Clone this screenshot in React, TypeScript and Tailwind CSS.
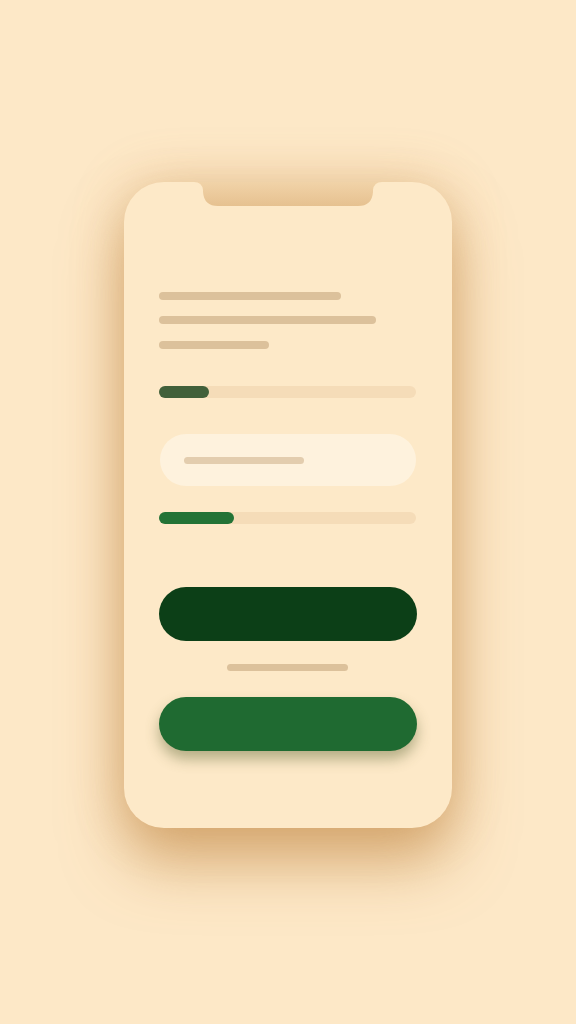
import React from "react";

export default function App() {
  return (
    <div className="w-[576px] h-[1024px] bg-[#fde8c7] flex justify-center pt-[182px] overflow-hidden">
      <div className="relative w-[328px] h-[646px] rounded-[40px] bg-[#fde9c8] shadow-[0_36px_60px_rgba(190,130,60,0.55),0_0_50px_rgba(205,150,85,0.4)]">
        {/* notch */}
        <svg className="absolute left-[70px] top-0" width="188" height="24" viewBox="0 0 188 24">
          <defs>
            <linearGradient id="ng" x1="0" y1="0" x2="0" y2="1">
              <stop offset="0" stopColor="#f1d3a8" />
              <stop offset="1" stopColor="#e6c190" />
            </linearGradient>
          </defs>
          <path d="M0 0 H188 Q180 0 179 8 V10 Q178 24 164 24 H24 Q10 24 9 10 V8 Q8 0 0 0 Z" fill="url(#ng)" />
        </svg>
        <div className="flex flex-col pl-[35px] pr-[36px] pt-[110px]">
          <div className="h-[8px] w-[182px] rounded-full bg-[#dcc19b]" />
          <div className="mt-[16px] h-[8px] w-[217px] rounded-full bg-[#dcc19b]" />
          <div className="mt-[17px] h-[8px] w-[110px] rounded-full bg-[#dcc19b]" />
          <div className="mt-[37px] h-[12px] w-full rounded-full bg-[#f5dcb8] flex">
            <div className="h-full w-[50px] rounded-full bg-[#41603a]" />
          </div>
          <div className="mt-[36px] ml-[1px] h-[52px] w-[256px] rounded-full bg-[#fef2dd] flex items-center pl-[24px]">
            <div className="h-[7px] w-[120px] rounded-full bg-[#e3cdae]" />
          </div>
          <div className="mt-[26px] h-[12px] w-full rounded-full bg-[#f5dcb8] flex">
            <div className="h-full w-[75px] rounded-full bg-[#237336]" />
          </div>
          <div className="mt-[63px] h-[54px] w-[258px] rounded-full bg-[#0c3f17]" />
          <div className="mt-[23px] self-center h-[7px] w-[121px] rounded-full bg-[#dcc19b]" />
          <div className="mt-[26px] h-[54px] w-[258px] rounded-full bg-[#1f6a31] shadow-[0_8px_14px_rgba(90,100,50,0.45)]" />
        </div>
      </div>
    </div>
  );
}
